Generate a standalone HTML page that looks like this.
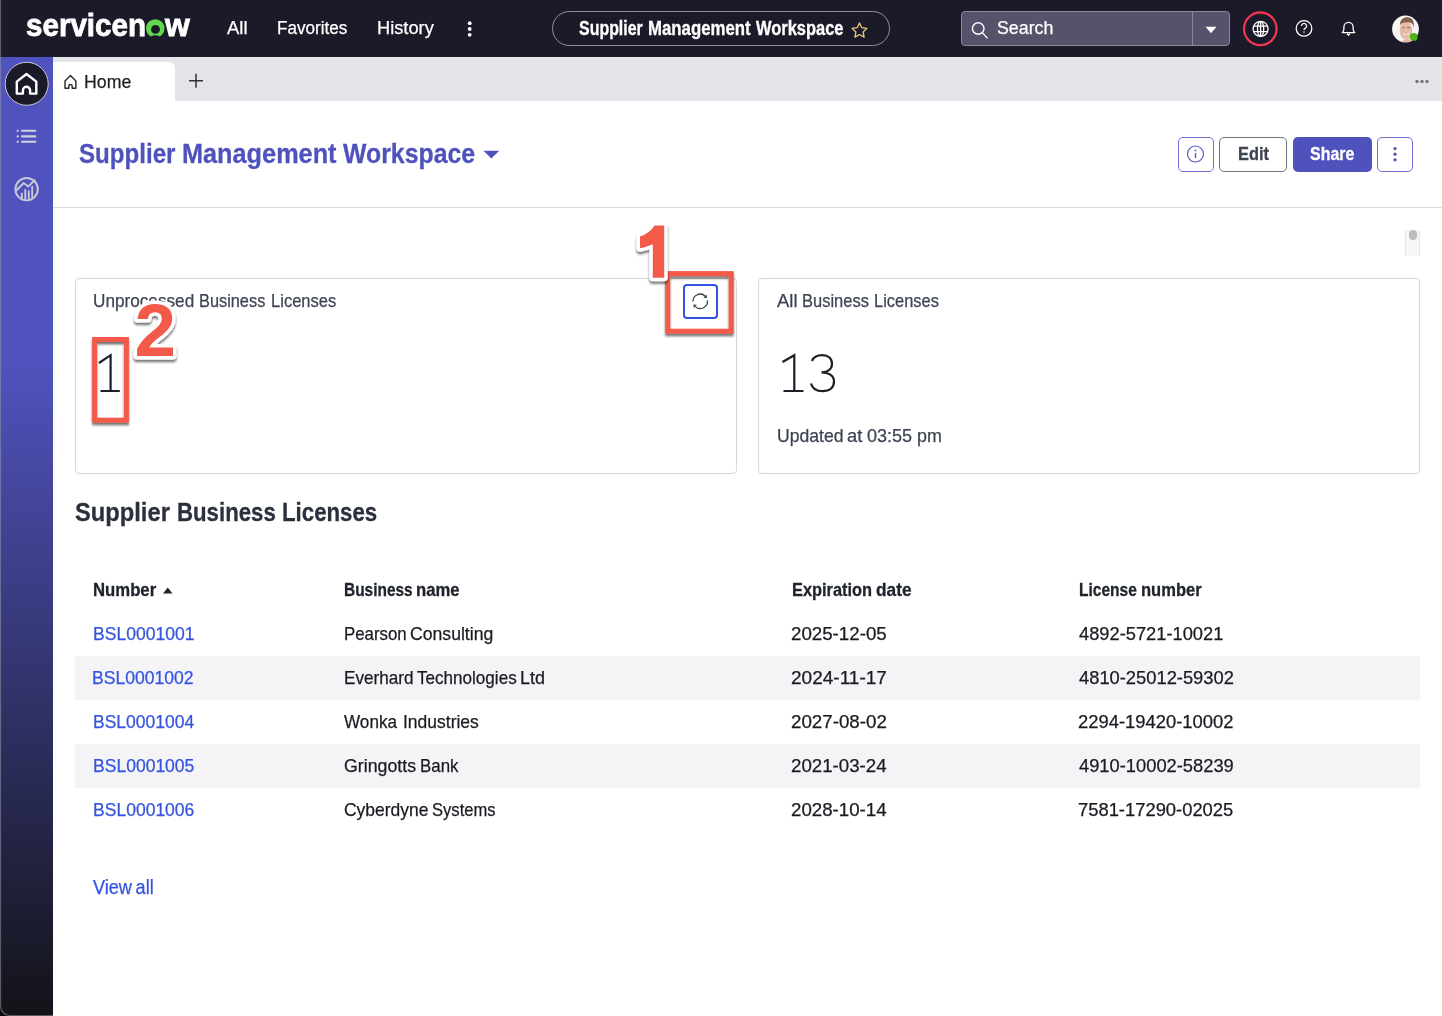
<!DOCTYPE html>
<html><head><meta charset="utf-8">
<style>
*{box-sizing:border-box;margin:0;padding:0}
html,body{width:1442px;height:1016px;overflow:hidden;background:#fff;font-family:"Liberation Sans",sans-serif;position:relative}
.abs{position:absolute}
.t{position:absolute;white-space:nowrap;line-height:1;transform-origin:0 0}
svg{position:absolute;overflow:visible}
</style></head><body>
<!-- top nav -->
<div class="abs" style="left:0;top:0;width:1442px;height:57px;background:#1b1a28"></div>
<!-- sidebar -->
<div class="abs" style="left:0;top:57px;width:53px;height:959px;background:linear-gradient(to bottom,#5053be 0px,#5053be 303px,#131318 959px)"></div>
<!-- tab bar -->
<div class="abs" style="left:53px;top:57px;width:1389px;height:44px;background:#e4e5e9"></div>
<div class="abs" style="left:53px;top:62px;width:122px;height:39px;background:#fff;border-radius:0 6px 0 0"></div>

<!-- logo -->
<svg style="left:0;top:0" width="200" height="57">
  <defs><mask id="om"><rect x="0" y="0" width="200" height="57" fill="#fff"/><circle cx="155.5" cy="29.4" r="4.4" fill="#000"/><circle cx="155.3" cy="43.2" r="8" fill="#000"/></mask></defs>
  <circle cx="155.25" cy="28.4" r="9.25" fill="#62d84e" mask="url(#om)"/>
</svg>
<!-- nav kebab -->
<svg style="left:465px;top:20px" width="10" height="18">
  <circle cx="4.7" cy="3.2" r="1.9" fill="#fff"/><circle cx="4.7" cy="9" r="1.9" fill="#fff"/><circle cx="4.7" cy="14.8" r="1.9" fill="#fff"/>
</svg>
<!-- pill -->
<div class="abs" style="left:552px;top:11px;width:338px;height:35px;border:1px solid #8f8e9b;border-radius:18px"></div>
<svg style="left:849.6px;top:20.6px" width="19" height="18" viewBox="0 0 24 23">
  <path d="M12 2.5l2.9 6.1 6.6.8-4.9 4.6 1.3 6.6L12 17.3l-5.9 3.3 1.3-6.6-4.9-4.6 6.6-.8z" fill="none" stroke="#ebcc7c" stroke-width="1.65" stroke-linejoin="round"/>
</svg>
<!-- search -->
<div class="abs" style="left:961px;top:11px;width:269px;height:35px;background:#55526b;border:1px solid #8a879b;border-radius:4px"></div>
<div class="abs" style="left:1192px;top:12px;width:1px;height:33px;background:#8a879b"></div>
<svg style="left:1205px;top:26px" width="12" height="8"><path d="M0.5 0.8h11L6 7.3z" fill="#fff"/></svg>
<svg style="left:970px;top:21px" width="20" height="20">
  <circle cx="8.2" cy="7.5" r="5.8" fill="none" stroke="#fff" stroke-width="1.4"/><path d="M12.3 11.6l4.8 5.3" stroke="#fff" stroke-width="1.4" stroke-linecap="round"/>
</svg>
<!-- globe with red circle -->
<svg style="left:1240px;top:9px" width="40" height="40">
  <circle cx="20.3" cy="19.8" r="16.3" fill="none" stroke="#ee3650" stroke-width="2.3"/>
  <g fill="none" stroke="#fff" stroke-width="1.3">
    <circle cx="20.6" cy="19.9" r="7.5"/>
    <ellipse cx="20.6" cy="19.9" rx="3.1" ry="7.5"/><path d="M20.6 12.4V27.4"/>
    <path d="M13.8 17.2h13.6M13.8 22.6h13.6"/>
  </g>
</svg>
<!-- help -->
<svg style="left:1293px;top:18px" width="22" height="22">
  <circle cx="11" cy="10.4" r="7.8" fill="none" stroke="#fff" stroke-width="1.3"/>
  <path d="M8.5 7.9 A2.55 2.55 0 1 1 12.4 10.1 C11.5 10.6 11 11.1 11 11.9 V12.1" fill="none" stroke="#fff" stroke-width="1.3" stroke-linecap="butt"/>
  <circle cx="11" cy="14.1" r=".75" fill="#fff"/>
</svg>
<!-- bell -->
<svg style="left:1340px;top:20px" width="18" height="18">
  <path d="M2.3 12.6 C3.6 11.6 3.9 10.4 3.9 8.6 V7 A4.6 4.6 0 0 1 13.1 7 V8.6 C13.1 10.4 13.4 11.6 14.7 12.6 Z" fill="none" stroke="#fff" stroke-width="1.3" stroke-linejoin="round"/>
  <path d="M7 13.5 L8.5 15.3 L10 13.5" fill="none" stroke="#fff" stroke-width="1.2" stroke-linejoin="round"/>
</svg>
<!-- avatar -->
<svg style="left:1392px;top:15px" width="30" height="30">
  <defs><clipPath id="av"><circle cx="13.5" cy="13.9" r="13.4"/></clipPath></defs>
  <circle cx="13.5" cy="13.9" r="13.4" fill="#f7f6f5"/>
  <g clip-path="url(#av)">
    <path d="M9 30 C10 25 12 24 15 24 C18 24 20 25 21 30z" fill="#e4b69d"/>
    <ellipse cx="14" cy="15.6" rx="6.3" ry="9.2" fill="#e6bca6"/>
    <path d="M8 10 C8 4.5 11.5 2.2 15.5 2.3 C20 2.5 22.5 5.5 21.8 12.5 C21 9.5 20 7.8 17.5 7.5 C14 7 10 7.5 8 10z" fill="#83624a"/>
    <path d="M10 12.8 H12.8 M15.2 12.6 H18" stroke="#9a6e58" stroke-width="1.1"/>
    <path d="M11.2 18.6 Q14 20.8 17 18.4" stroke="#fff" stroke-width="1" fill="#c9836f"/>
  </g>
  <circle cx="21.7" cy="21.9" r="3.9" fill="#4fb21a"/>
</svg>

<!-- sidebar icons -->
<svg style="left:0;top:57px" width="53" height="160">
  <circle cx="26.7" cy="26.8" r="21.5" fill="#1b1a28" stroke="#c9c9d6" stroke-width="1"/>
  <path d="M16.8 24.6 L26.5 17 L36.3 24.6 V36.6 H30.1 V33.4 A3.6 3.6 0 0 0 22.9 33.4 V36.6 H16.8 Z" fill="none" stroke="#fff" stroke-width="2.4" stroke-linejoin="round"/>
  <g stroke="#d2d2de" stroke-width="2.1" stroke-linecap="round">
    <path d="M22 73.8H35.3M22 79.4H35.3M22 84.8H35.3"/>
  </g>
  <g fill="#d2d2de"><circle cx="17.7" cy="73.8" r="1.15"/><circle cx="17.7" cy="79.4" r="1.15"/><circle cx="17.7" cy="84.8" r="1.15"/></g>
  <g fill="none" stroke="#c8c8d6" stroke-width="1.9" stroke-linecap="round" stroke-linejoin="round">
    <circle cx="26.6" cy="132.2" r="11.2"/>
    <path d="M16.4 133.5 L23.6 126 L28.3 129.4 L34.6 123.2"/>
    <path d="M21.9 141.2V136.5M25.3 142V133M28.8 141.8V134.3M32.2 140V129.6"/>
  </g>
</svg>

<!-- tab home icon + plus + dots -->
<svg style="left:60px;top:70px" width="22" height="22">
  <path d="M5 10.9 L10.45 5.5 L15.9 10.9 V18.2 H12.2 V16.2 A1.72 1.72 0 0 0 8.76 16.2 V18.2 H5 Z" fill="none" stroke="#2b2d33" stroke-width="1.45" stroke-linejoin="round"/>
</svg>
<svg style="left:186px;top:71px" width="20" height="20">
  <path d="M3 9.8H17M10 2.8V16.8" stroke="#333" stroke-width="1.5"/>
</svg>
<svg style="left:1412px;top:75px" width="20" height="12">
  <circle cx="5" cy="6.5" r="1.7" fill="#73757b"/><circle cx="10" cy="6.5" r="1.7" fill="#73757b"/><circle cx="15" cy="6.5" r="1.7" fill="#73757b"/>
</svg>

<!-- header -->
<svg style="left:483px;top:150px" width="18" height="10"><path d="M0.5 0.8H16.2L8.35 8.5z" fill="#4f52bd"/></svg>
<div class="abs" style="left:53px;top:207px;width:1389px;height:1px;background:#d9dbe0"></div>
<div class="abs" style="left:1178px;top:137px;width:36px;height:35px;border:1.4px solid #6f72d3;border-radius:5px"></div>
<svg style="left:1184px;top:143px" width="24" height="24">
  <circle cx="11.5" cy="11" r="8" fill="none" stroke="#5558c8" stroke-width="1.2"/>
  <path d="M11.5 10V15" stroke="#5558c8" stroke-width="1.4"/><circle cx="11.5" cy="7.4" r=".9" fill="#5558c8"/>
</svg>
<div class="abs" style="left:1219px;top:137px;width:68px;height:35px;border:1.5px solid #6e737c;border-radius:5px"></div>
<div class="abs" style="left:1293px;top:137px;width:79px;height:35px;background:#4f52bd;border-radius:5px"></div>
<div class="abs" style="left:1377px;top:137px;width:36px;height:35px;border:1.4px solid #6f72d3;border-radius:5px"></div>
<svg style="left:1390px;top:144px" width="10" height="20">
  <circle cx="5" cy="4.6" r="1.6" fill="#4f52bd"/><circle cx="5" cy="10.2" r="1.6" fill="#4f52bd"/><circle cx="5" cy="15.8" r="1.6" fill="#4f52bd"/>
</svg>

<!-- scroll indicator -->
<div class="abs" style="left:1405px;top:230px;width:15px;height:26px;background:#f7f7f7;border-left:1px solid #e6e6e6;border-right:1px solid #e6e6e6"></div>
<div class="abs" style="left:1409px;top:230px;width:8px;height:10px;background:#bdbdbd;border-radius:4px"></div>

<!-- cards -->
<div class="abs" style="left:75px;top:278px;width:662px;height:196px;border:1px solid #d5d7dd;border-radius:4px"></div>
<div class="abs" style="left:758px;top:278px;width:662px;height:196px;border:1px solid #d5d7dd;border-radius:4px"></div>
<!-- refresh button -->
<div class="abs" style="left:683px;top:284px;width:35px;height:35px;border:2px solid #3452e2;border-radius:4px"></div>
<svg style="left:690px;top:291px" width="22" height="22">
  <g fill="none" stroke="#363b46" stroke-width="1.25">
    <path d="M2.95 10.6 A7.26 7.26 0 0 1 15.3 5.2"/>
    <path d="M17.42 9.44 A7.26 7.26 0 0 1 5.3 15.6"/>
  </g>
  <path d="M16.9 3.7 V6.9 L13.3 6.7z" fill="#363b46"/>
  <path d="M3.5 13.5 L6.9 13.7 L3.6 16.9z" fill="#363b46"/>
</svg>
<!-- big numbers (light) -->
<svg style="left:0;top:0" width="1442" height="500">
  <g fill="none" stroke="#1c1f26" stroke-width="2.2">
    <path d="M99 363 L110.6 355.2 V391 M100.5 391 H119.8"/>
    <path d="M782.5 362 L794.3 355.2 V391 M783.5 391 H803.5"/>
    <path d="M812 361 C813.5 357 817 355.2 822.3 355.2 C828.5 355.2 832 358.5 832 363.8 C832 369.5 827.5 372.3 821.5 372.3 C828.5 372.3 834 375.5 834 381.5 C834 387.8 829.5 391.2 822.5 391.2 C816.5 391.2 812.3 388.5 811 383.5"/>
  </g>
</svg>

<!-- table rows bg -->
<div class="abs" style="left:75px;top:656px;width:1345px;height:44px;background:#f4f4f6"></div>
<div class="abs" style="left:75px;top:744px;width:1345px;height:44px;background:#f4f4f6"></div>
<svg style="left:160px;top:584px" width="16" height="12"><path d="M3 9.5H12.5L7.75 3.5z" fill="#1f232b"/></svg>

<div class="t" style="left:25.86px;top:10.53px;font-size:30.68px;font-weight:bold;color:#ffffff;transform:scaleX(0.9642);-webkit-text-stroke:0.8px #fff;">servicen</div>
<div class="t" style="left:164.86px;top:10.53px;font-size:30.68px;font-weight:bold;color:#ffffff;transform:scaleX(1.0380);-webkit-text-stroke:0.8px #fff;">w</div>
<div class="t" style="left:227.00px;top:19.22px;font-size:18.82px;font-weight:normal;color:#ffffff;transform:scaleX(0.9812);-webkit-text-stroke:0.25px #ffffff;">All</div>
<div class="t" style="left:276.83px;top:19.22px;font-size:18.82px;font-weight:normal;color:#ffffff;transform:scaleX(0.9096);-webkit-text-stroke:0.25px #ffffff;">Favorites</div>
<div class="t" style="left:376.94px;top:19.22px;font-size:18.82px;font-weight:normal;color:#ffffff;transform:scaleX(0.9696);-webkit-text-stroke:0.25px #ffffff;">History</div>
<div class="t" style="left:579.42px;top:19.44px;font-size:19.33px;font-weight:bold;color:#ffffff;transform:scaleX(0.8253);-webkit-text-stroke:0.30px #ffffff;">Supplier</div>
<div class="t" style="left:647.71px;top:19.44px;font-size:19.33px;font-weight:bold;color:#ffffff;transform:scaleX(0.8683);-webkit-text-stroke:0.30px #ffffff;">Management</div>
<div class="t" style="left:755.50px;top:19.44px;font-size:19.33px;font-weight:bold;color:#ffffff;transform:scaleX(0.8514);-webkit-text-stroke:0.30px #ffffff;">Workspace</div>
<div class="t" style="left:997.20px;top:20.39px;font-size:17.73px;font-weight:normal;color:#ffffff;transform:scaleX(1.0042);-webkit-text-stroke:0.25px #ffffff;">Search</div>
<div class="t" style="left:83.98px;top:72.95px;font-size:18.60px;font-weight:normal;color:#1e1e24;transform:scaleX(0.9523);-webkit-text-stroke:0.25px #1e1e24;">Home</div>
<div class="t" style="left:79.38px;top:140.05px;font-size:28.05px;font-weight:bold;color:#4f52bd;transform:scaleX(0.8599);-webkit-text-stroke:0.30px #4f52bd;">Supplier</div>
<div class="t" style="left:181.86px;top:140.05px;font-size:28.05px;font-weight:bold;color:#4f52bd;transform:scaleX(0.9014);-webkit-text-stroke:0.30px #4f52bd;">Management</div>
<div class="t" style="left:342.90px;top:140.05px;font-size:28.05px;font-weight:bold;color:#4f52bd;transform:scaleX(0.8858);-webkit-text-stroke:0.30px #4f52bd;">Workspace</div>
<div class="t" style="left:1237.73px;top:144.85px;font-size:18.60px;font-weight:bold;color:#3e4552;transform:scaleX(0.8820);-webkit-text-stroke:0.30px #3e4552;">Edit</div>
<div class="t" style="left:1309.92px;top:144.85px;font-size:18.60px;font-weight:bold;color:#ffffff;transform:scaleX(0.8592);-webkit-text-stroke:0.30px #ffffff;">Share</div>
<div class="t" style="left:93.01px;top:292.05px;font-size:18.60px;font-weight:normal;color:#3c4453;transform:scaleX(0.9236);-webkit-text-stroke:0.25px #3c4453;">Unprocessed</div>
<div class="t" style="left:199.09px;top:292.05px;font-size:18.60px;font-weight:normal;color:#3c4453;transform:scaleX(0.8788);-webkit-text-stroke:0.25px #3c4453;">Business</div>
<div class="t" style="left:270.88px;top:292.05px;font-size:18.60px;font-weight:normal;color:#3c4453;transform:scaleX(0.8898);-webkit-text-stroke:0.25px #3c4453;">Licenses</div>
<div class="t" style="left:777.20px;top:292.05px;font-size:18.60px;font-weight:normal;color:#3c4453;transform:scaleX(0.9927);-webkit-text-stroke:0.25px #3c4453;">All</div>
<div class="t" style="left:802.18px;top:292.05px;font-size:18.60px;font-weight:normal;color:#3c4453;transform:scaleX(0.8870);-webkit-text-stroke:0.25px #3c4453;">Business</div>
<div class="t" style="left:874.18px;top:292.05px;font-size:18.60px;font-weight:normal;color:#3c4453;transform:scaleX(0.8841);-webkit-text-stroke:0.25px #3c4453;">Licenses</div>
<div class="t" style="left:776.78px;top:426.52px;font-size:18.17px;font-weight:normal;color:#3c4453;transform:scaleX(0.9692);-webkit-text-stroke:0.25px #3c4453;">Updated</div>
<div class="t" style="left:847.27px;top:426.52px;font-size:18.17px;font-weight:normal;color:#3c4453;transform:scaleX(1.0097);-webkit-text-stroke:0.25px #3c4453;">at</div>
<div class="t" style="left:867.28px;top:426.52px;font-size:18.17px;font-weight:normal;color:#3c4453;transform:scaleX(0.9939);-webkit-text-stroke:0.25px #3c4453;">03:55</div>
<div class="t" style="left:916.74px;top:426.52px;font-size:18.17px;font-weight:normal;color:#3c4453;transform:scaleX(0.9829);-webkit-text-stroke:0.25px #3c4453;">pm</div>
<div class="t" style="left:75.39px;top:499.18px;font-size:26.60px;font-weight:bold;color:#2a303c;transform:scaleX(0.8916);-webkit-text-stroke:0.30px #2a303c;">Supplier</div>
<div class="t" style="left:176.76px;top:499.18px;font-size:26.60px;font-weight:bold;color:#2a303c;transform:scaleX(0.8351);-webkit-text-stroke:0.30px #2a303c;">Business</div>
<div class="t" style="left:281.55px;top:499.18px;font-size:26.60px;font-weight:bold;color:#2a303c;transform:scaleX(0.8366);-webkit-text-stroke:0.30px #2a303c;">Licenses</div>
<div class="t" style="left:92.91px;top:581.24px;font-size:18.02px;font-weight:bold;color:#1f232b;transform:scaleX(0.9282);-webkit-text-stroke:0.30px #1f232b;">Number</div>
<div class="t" style="left:343.90px;top:581.24px;font-size:18.02px;font-weight:bold;color:#1f232b;transform:scaleX(0.8578);-webkit-text-stroke:0.30px #1f232b;">Business</div>
<div class="t" style="left:416.31px;top:581.24px;font-size:18.02px;font-weight:bold;color:#1f232b;transform:scaleX(0.9262);-webkit-text-stroke:0.30px #1f232b;">name</div>
<div class="t" style="left:792.23px;top:581.24px;font-size:18.02px;font-weight:bold;color:#1f232b;transform:scaleX(0.9094);-webkit-text-stroke:0.30px #1f232b;">Expiration</div>
<div class="t" style="left:876.01px;top:581.24px;font-size:18.02px;font-weight:bold;color:#1f232b;transform:scaleX(0.9612);-webkit-text-stroke:0.30px #1f232b;">date</div>
<div class="t" style="left:1078.79px;top:581.24px;font-size:18.02px;font-weight:bold;color:#1f232b;transform:scaleX(0.8617);-webkit-text-stroke:0.30px #1f232b;">License</div>
<div class="t" style="left:1140.82px;top:581.24px;font-size:18.02px;font-weight:bold;color:#1f232b;transform:scaleX(0.9180);-webkit-text-stroke:0.30px #1f232b;">number</div>
<div class="t" style="left:92.50px;top:625.00px;font-size:18.31px;font-weight:normal;color:#3553df;transform:scaleX(0.9588);-webkit-text-stroke:0.25px #3553df;">BSL0001001</div>
<div class="t" style="left:343.55px;top:625.00px;font-size:18.31px;font-weight:normal;color:#1a1b21;transform:scaleX(0.9197);-webkit-text-stroke:0.25px #1a1b21;">Pearson</div>
<div class="t" style="left:409.92px;top:625.00px;font-size:18.31px;font-weight:normal;color:#1a1b21;transform:scaleX(0.9630);-webkit-text-stroke:0.25px #1a1b21;">Consulting</div>
<div class="t" style="left:791.26px;top:625.00px;font-size:18.31px;font-weight:normal;color:#1a1b21;transform:scaleX(1.0225);-webkit-text-stroke:0.25px #1a1b21;">2025-12-05</div>
<div class="t" style="left:1078.93px;top:625.00px;font-size:18.31px;font-weight:normal;color:#1a1b21;transform:scaleX(0.9993);-webkit-text-stroke:0.25px #1a1b21;">4892-5721-10021</div>
<div class="t" style="left:92.49px;top:669.00px;font-size:18.31px;font-weight:normal;color:#3553df;transform:scaleX(0.9597);-webkit-text-stroke:0.25px #3553df;">BSL0001002</div>
<div class="t" style="left:343.53px;top:669.00px;font-size:18.31px;font-weight:normal;color:#1a1b21;transform:scaleX(0.9371);-webkit-text-stroke:0.25px #1a1b21;">Everhard</div>
<div class="t" style="left:416.56px;top:669.00px;font-size:18.31px;font-weight:normal;color:#1a1b21;transform:scaleX(0.9335);-webkit-text-stroke:0.25px #1a1b21;">Technologies</div>
<div class="t" style="left:520.46px;top:669.00px;font-size:18.31px;font-weight:normal;color:#1a1b21;transform:scaleX(0.9824);-webkit-text-stroke:0.25px #1a1b21;">Ltd</div>
<div class="t" style="left:791.25px;top:669.00px;font-size:18.31px;font-weight:normal;color:#1a1b21;transform:scaleX(1.0401);-webkit-text-stroke:0.25px #1a1b21;">2024-11-17</div>
<div class="t" style="left:1078.93px;top:669.00px;font-size:18.31px;font-weight:normal;color:#1a1b21;transform:scaleX(1.0015);-webkit-text-stroke:0.25px #1a1b21;">4810-25012-59302</div>
<div class="t" style="left:92.50px;top:713.00px;font-size:18.31px;font-weight:normal;color:#3553df;transform:scaleX(0.9563);-webkit-text-stroke:0.25px #3553df;">BSL0001004</div>
<div class="t" style="left:344.41px;top:713.00px;font-size:18.31px;font-weight:normal;color:#1a1b21;transform:scaleX(0.9366);-webkit-text-stroke:0.25px #1a1b21;">Wonka</div>
<div class="t" style="left:402.82px;top:713.00px;font-size:18.31px;font-weight:normal;color:#1a1b21;transform:scaleX(0.9559);-webkit-text-stroke:0.25px #1a1b21;">Industries</div>
<div class="t" style="left:791.26px;top:713.00px;font-size:18.31px;font-weight:normal;color:#1a1b21;transform:scaleX(1.0246);-webkit-text-stroke:0.25px #1a1b21;">2027-08-02</div>
<div class="t" style="left:1078.38px;top:713.00px;font-size:18.31px;font-weight:normal;color:#1a1b21;transform:scaleX(1.0051);-webkit-text-stroke:0.25px #1a1b21;">2294-19420-10002</div>
<div class="t" style="left:92.50px;top:757.00px;font-size:18.31px;font-weight:normal;color:#3553df;transform:scaleX(0.9580);-webkit-text-stroke:0.25px #3553df;">BSL0001005</div>
<div class="t" style="left:343.61px;top:757.00px;font-size:18.31px;font-weight:normal;color:#1a1b21;transform:scaleX(0.9710);-webkit-text-stroke:0.25px #1a1b21;">Gringotts</div>
<div class="t" style="left:420.35px;top:757.00px;font-size:18.31px;font-weight:normal;color:#1a1b21;transform:scaleX(0.9233);-webkit-text-stroke:0.25px #1a1b21;">Bank</div>
<div class="t" style="left:791.27px;top:757.00px;font-size:18.31px;font-weight:normal;color:#1a1b21;transform:scaleX(1.0205);-webkit-text-stroke:0.25px #1a1b21;">2021-03-24</div>
<div class="t" style="left:1078.93px;top:757.00px;font-size:18.31px;font-weight:normal;color:#1a1b21;transform:scaleX(1.0009);-webkit-text-stroke:0.25px #1a1b21;">4910-10002-58239</div>
<div class="t" style="left:92.50px;top:801.00px;font-size:18.31px;font-weight:normal;color:#3553df;transform:scaleX(0.9580);-webkit-text-stroke:0.25px #3553df;">BSL0001006</div>
<div class="t" style="left:343.63px;top:801.00px;font-size:18.31px;font-weight:normal;color:#1a1b21;transform:scaleX(0.9538);-webkit-text-stroke:0.25px #1a1b21;">Cyberdyne</div>
<div class="t" style="left:431.85px;top:801.00px;font-size:18.31px;font-weight:normal;color:#1a1b21;transform:scaleX(0.9059);-webkit-text-stroke:0.25px #1a1b21;">Systems</div>
<div class="t" style="left:791.27px;top:801.00px;font-size:18.31px;font-weight:normal;color:#1a1b21;transform:scaleX(1.0205);-webkit-text-stroke:0.25px #1a1b21;">2028-10-14</div>
<div class="t" style="left:1078.38px;top:801.00px;font-size:18.31px;font-weight:normal;color:#1a1b21;transform:scaleX(1.0039);-webkit-text-stroke:0.25px #1a1b21;">7581-17290-02025</div>
<div class="t" style="left:92.81px;top:878.11px;font-size:19.48px;font-weight:normal;color:#3553df;transform:scaleX(0.9312);-webkit-text-stroke:0.25px #3553df;word-spacing:-1.56px;">View all</div>


<!-- window frame -->
<svg style="left:0;top:0" width="60" height="1016">
  <path d="M0 1006 A10 10 0 0 0 10 1016 H0 Z" fill="#0b0b0e"/>
  <path d="M0.5 0 V1006 A9.5 9.5 0 0 0 10 1015.5 H53" fill="none" stroke="rgba(150,150,165,0.55)" stroke-width="1.2"/>
</svg>
<!-- annotations -->
<svg style="left:0;top:0" width="1442" height="500">
  <defs>
    <filter id="sh" x="-20%" y="-20%" width="140%" height="140%">
      <feDropShadow dx="0" dy="2.5" stdDeviation="1" flood-color="#000" flood-opacity="0.55"/>
    </filter>
  </defs>
  <g filter="url(#sh)">
    <rect x="667.7" y="273.6" width="63.5" height="57.6" fill="none" stroke="#f35a4a" stroke-width="5"/>
    <rect x="94.6" y="339.5" width="31.8" height="80.7" fill="none" stroke="#f35a4a" stroke-width="5"/>
  </g>
  <g filter="url(#sh)" font-family="Liberation Sans" font-weight="bold" fill="#f35a4a" stroke="#fff" stroke-width="7" paint-order="stroke" stroke-linejoin="round">
    <path d="M654.5 225.4 H664.2 V277.8 H652.8 V244.2 Q646.5 247 640 248.2 V236.5 Q650 233 654.5 225.4 Z"/>
    <text x="134.6" y="356" font-size="74" textLength="41.5" lengthAdjust="spacingAndGlyphs">2</text>
  </g>
</svg>
</body></html>
